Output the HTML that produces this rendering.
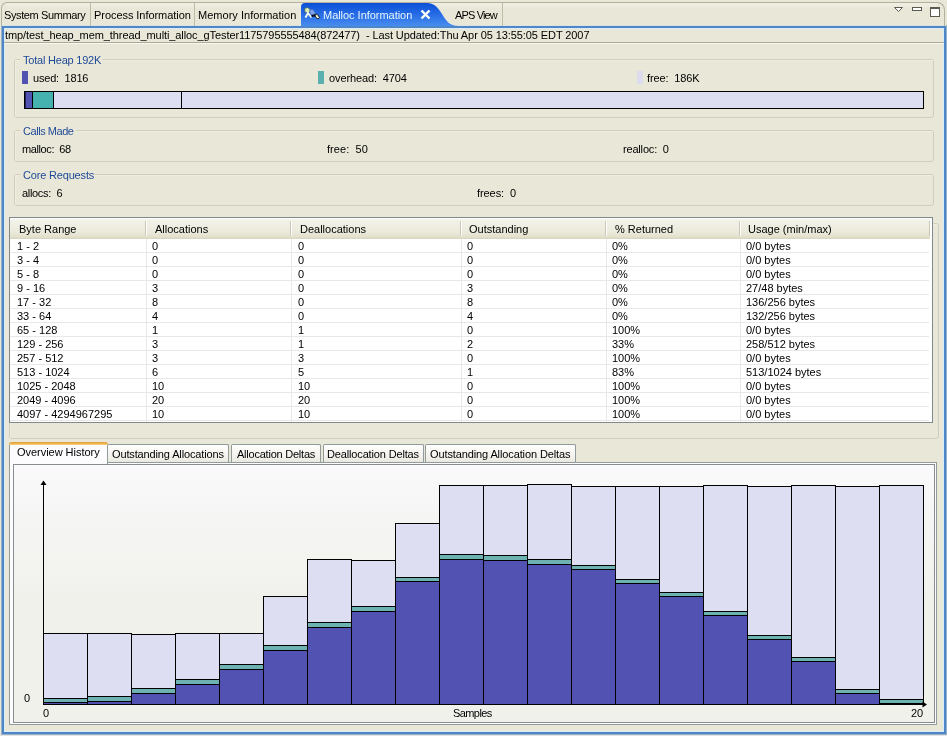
<!DOCTYPE html>
<html><head><meta charset="utf-8"><style>
html,body{margin:0;padding:0}
body{width:947px;height:736px;overflow:hidden;position:relative;background:#E9E7D8;font-family:"Liberation Sans", sans-serif;font-size:11px}
.t{position:absolute;white-space:nowrap;line-height:13px;will-change:transform}
</style></head><body>
<div style="position:absolute;left:1px;top:2px;width:944px;height:40px;border-top:1px solid #B4B09C;border-left:1px solid #B4B09C;border-right:1px solid #B4B09C;border-radius:6px 8px 0 0;box-sizing:border-box"></div>
<div style="position:absolute;left:7px;top:3px;width:930px;height:5px;background:linear-gradient(#F1EFE3,#EDEBDD 70%,#E9E7D8)"></div>
<div style="position:absolute;left:4px;top:25px;width:940px;height:1px;background:#DCE4E0"></div>
<div style="position:absolute;left:90px;top:3px;width:1px;height:23px;background:#C0BCA8"></div>
<div style="position:absolute;left:194px;top:3px;width:1px;height:23px;background:#C0BCA8"></div>
<div style="position:absolute;left:502px;top:3px;width:1px;height:23px;background:#C0BCA8"></div>
<div class="t" id="k0" style="left:4.00px;top:9.35px;color:#000;font-size:11px;letter-spacing:-0.385px;">System Summary</div>
<div class="t" id="k1" style="left:94.00px;top:9.35px;color:#000;font-size:11px;letter-spacing:-0.055px;">Process Information</div>
<div class="t" id="k2" style="left:197.50px;top:9.35px;color:#000;font-size:11px;letter-spacing:0.029px;">Memory Information</div>
<div class="t" id="k3" style="left:455.00px;top:9.35px;color:#000;font-size:11px;letter-spacing:-0.857px;">APS View</div>
<svg style="position:absolute;left:300px;top:2px" width="170" height="26" viewBox="0 0 170 26">
<defs><linearGradient id="tg" x1="0" y1="0" x2="0" y2="1">
<stop offset="0" stop-color="#0B4FD6"/><stop offset="0.5" stop-color="#2A6FE6"/><stop offset="1" stop-color="#4D93F0"/></linearGradient></defs>
<path d="M1,26 L1,5 Q1,1 5,1 L127,1 C135,1 138,6 142,12 C146,19 150,24 158,24 L158,26 Z" fill="url(#tg)"/>
</svg>
<div class="t" id="k4" style="left:322.60px;top:9.35px;color:#E6F6FF;font-size:11px;letter-spacing:-0.034px;">Malloc Information</div>
<svg style="position:absolute;left:420px;top:9px" width="11" height="11" viewBox="0 0 11 11">
<path d="M1.5,1.5 L9.5,9.5 M9.5,1.5 L1.5,9.5" stroke="#FFFFFF" stroke-width="2.4"/></svg>
<svg style="position:absolute;left:302px;top:5px" width="20" height="18" viewBox="0 0 20 18">
<path d="M2.5,3.5 L5.5,2.5 L8,4 L8,6.5 L6,8 L3,7.5 Z" fill="#D8ECB8" stroke="#3A5A60" stroke-width="0.8"/>
<path d="M3.5,12.5 L6,8 L9.5,12.5" fill="none" stroke="#F4FAF4" stroke-width="2"/>
<path d="M7.5,5 L10.5,4.5 L13.5,8 L11.5,10 L8.5,9 Z" fill="#8CA8E8" stroke="#5A78C0" stroke-width="0.6" opacity="0.9"/>
<path d="M9.5,11 L13,10.5" stroke="#050A18" stroke-width="2"/>
<path d="M13,9 L15.5,9.5 L17.5,12.5 L16,14 L13.5,12 Z" fill="#F0ECC8" stroke="#0A1A20" stroke-width="0.9"/>
</svg>
<svg style="position:absolute;left:890px;top:4px" width="54" height="16" viewBox="0 0 54 16">
<path d="M4.5,3.5 L12.5,3.5 L8.5,7.5 Z" fill="#fff" stroke="#5A5A50" stroke-width="1"/>
<rect x="22.5" y="3.5" width="9" height="3" fill="#fff" stroke="#5A5A50" stroke-width="1"/>
<rect x="40.5" y="3.5" width="9" height="9" fill="#fff" stroke="#5A5A50" stroke-width="1"/>
<rect x="41" y="4" width="8" height="1" fill="#5A5A50"/>
</svg>
<div style="position:absolute;left:0px;top:735px;width:947px;height:1px;background:#E4E4E6"></div>
<div style="position:absolute;left:1px;top:25px;width:946px;height:710px;border:1px solid #97B2C6;border-top:none;box-sizing:border-box"></div>
<div style="position:absolute;left:2px;top:26px;width:944px;height:708px;border:2px solid #4E86C8;box-sizing:border-box"></div>
<div style="position:absolute;left:4px;top:28px;width:940px;height:704px;border:1px solid #D8ECF9;box-sizing:border-box"></div>
<div class="t" id="k5" style="left:5.00px;top:29.35px;color:#000;font-size:11px;letter-spacing:-0.087px;">tmp/test_heap_mem_thread_multi_alloc_gTester1175795555484(872477)&nbsp; - Last Updated:Thu Apr 05 13:55:05 EDT 2007</div>
<div style="position:absolute;left:4px;top:42px;width:940px;height:1px;background:#ACA996"></div>
<div style="position:absolute;left:4px;top:43px;width:940px;height:1px;background:#F8F7F0"></div>
<div style="position:absolute;left:14px;top:59px;width:920px;height:59px;border:1px solid #D0CDB8;border-radius:3px;box-sizing:border-box"></div>
<div style="position:absolute;left:15px;top:60px;width:918px;height:57px;border-top:1px solid #EFEDE2;border-left:1px solid #EFEDE2;border-radius:2px;box-sizing:border-box"></div>
<div style="position:absolute;left:20px;top:54px;width:82px;height:10px;background:#E9E7D8"></div>
<div class="t" id="k6" style="left:23.00px;top:54.35px;color:#1F4A98;font-size:11px;letter-spacing:-0.214px;">Total Heap 192K</div>
<div style="position:absolute;left:14px;top:130px;width:920px;height:32px;border:1px solid #D0CDB8;border-radius:3px;box-sizing:border-box"></div>
<div style="position:absolute;left:15px;top:131px;width:918px;height:30px;border-top:1px solid #EFEDE2;border-left:1px solid #EFEDE2;border-radius:2px;box-sizing:border-box"></div>
<div style="position:absolute;left:20px;top:125px;width:56px;height:10px;background:#E9E7D8"></div>
<div class="t" id="k7" style="left:22.50px;top:125.35px;color:#1F4A98;font-size:11px;letter-spacing:-0.454px;">Calls Made</div>
<div style="position:absolute;left:14px;top:174px;width:920px;height:32px;border:1px solid #D0CDB8;border-radius:3px;box-sizing:border-box"></div>
<div style="position:absolute;left:15px;top:175px;width:918px;height:30px;border-top:1px solid #EFEDE2;border-left:1px solid #EFEDE2;border-radius:2px;box-sizing:border-box"></div>
<div style="position:absolute;left:20px;top:169px;width:74px;height:10px;background:#E9E7D8"></div>
<div class="t" id="k8" style="left:22.50px;top:169.35px;color:#1F4A98;font-size:11px;letter-spacing:-0.176px;">Core Requests</div>
<div style="position:absolute;left:9px;top:223px;width:930px;height:216px;border:1px solid #D0CDB8;border-radius:3px;box-sizing:border-box"></div>
<div style="position:absolute;left:10px;top:224px;width:928px;height:214px;border-top:1px solid #EFEDE2;border-left:1px solid #EFEDE2;border-radius:2px;box-sizing:border-box"></div>
<div style="position:absolute;left:22px;top:71px;width:6px;height:13px;background:#5252B2"></div>
<div class="t" id="k9" style="left:33.00px;top:72.35px;color:#000;font-size:11px;letter-spacing:-0.200px;">used:&nbsp; 1816</div>
<div style="position:absolute;left:318px;top:71px;width:6px;height:13px;background:#5AAFAF"></div>
<div class="t" id="k10" style="left:328.50px;top:72.35px;color:#000;font-size:11px;letter-spacing:-0.115px;">overhead:&nbsp; 4704</div>
<div style="position:absolute;left:637px;top:71px;width:6px;height:13px;background:#DCDCEE"></div>
<div class="t" id="k11" style="left:647.20px;top:72.35px;color:#000;font-size:11px;letter-spacing:-0.120px;">free:&nbsp; 186K</div>
<svg style="position:absolute;left:24px;top:91px" width="901" height="18" viewBox="0 0 901 18" shape-rendering="crispEdges">
<rect x="0.5" y="0.5" width="899" height="17" fill="#DEDEF3" stroke="#000"/>
<rect x="1" y="1" width="1" height="16" fill="#202060"/>
<rect x="2" y="1" width="6" height="16" fill="#5252B2"/>
<rect x="8" y="1" width="1" height="16" fill="#000"/>
<rect x="9" y="1" width="20" height="16" fill="#46B2B0"/>
<rect x="29" y="1" width="1" height="16" fill="#000"/>
<rect x="157" y="1" width="1" height="16" fill="#000"/>
</svg>
<div class="t" id="k12" style="left:22.00px;top:143.35px;color:#000;font-size:11px;letter-spacing:-0.400px;">malloc:&nbsp; 68</div>
<div class="t" id="k13" style="left:326.50px;top:143.35px;color:#000;font-size:11px;letter-spacing:0.059px;">free:&nbsp; 50</div>
<div class="t" id="k14" style="left:622.80px;top:143.35px;color:#000;font-size:11px;letter-spacing:-0.180px;">realloc:&nbsp; 0</div>
<div class="t" id="k15" style="left:22.00px;top:187.35px;color:#000;font-size:11px;letter-spacing:-0.324px;">allocs:&nbsp; 6</div>
<div class="t" id="k16" style="left:476.60px;top:187.35px;color:#000;font-size:11px;letter-spacing:-0.075px;">frees:&nbsp; 0</div>
<div style="position:absolute;left:9px;top:217px;width:924px;height:206px;border:1px solid #808A8C;background:#fff;box-sizing:border-box"></div>
<div style="position:absolute;left:10px;top:218px;width:920px;height:21px;background:linear-gradient(#FFFFFF 0px,#F3F2EA 2px,#EBEADB 14px,#E3E0CC 19px,#D6D2BD 21px)"></div>
<div style="position:absolute;left:145px;top:221px;width:1px;height:15px;background:#CBC7B3"></div>
<div style="position:absolute;left:146px;top:221px;width:1px;height:15px;background:#FFFFFF"></div>
<div style="position:absolute;left:290px;top:221px;width:1px;height:15px;background:#CBC7B3"></div>
<div style="position:absolute;left:291px;top:221px;width:1px;height:15px;background:#FFFFFF"></div>
<div style="position:absolute;left:460px;top:221px;width:1px;height:15px;background:#CBC7B3"></div>
<div style="position:absolute;left:461px;top:221px;width:1px;height:15px;background:#FFFFFF"></div>
<div style="position:absolute;left:605px;top:221px;width:1px;height:15px;background:#CBC7B3"></div>
<div style="position:absolute;left:606px;top:221px;width:1px;height:15px;background:#FFFFFF"></div>
<div style="position:absolute;left:739px;top:221px;width:1px;height:15px;background:#CBC7B3"></div>
<div style="position:absolute;left:740px;top:221px;width:1px;height:15px;background:#FFFFFF"></div>
<div style="position:absolute;left:929px;top:221px;width:1px;height:15px;background:#CBC7B3"></div>
<div class="t" style="left:19.00px;top:223.35px;color:#000;font-size:11px;">Byte Range</div>
<div class="t" style="left:155.00px;top:223.35px;color:#000;font-size:11px;">Allocations</div>
<div class="t" style="left:300.00px;top:223.35px;color:#000;font-size:11px;">Deallocations</div>
<div class="t" style="left:469.00px;top:223.35px;color:#000;font-size:11px;">Outstanding</div>
<div class="t" style="left:615.00px;top:223.35px;color:#000;font-size:11px;">% Returned</div>
<div class="t" style="left:748.00px;top:223.35px;color:#000;font-size:11px;">Usage (min/max)</div>
<div style="position:absolute;left:10px;top:252px;width:919px;height:1px;background:#E8E8E8"></div>
<div class="t" style="left:17.00px;top:240.35px;color:#000;font-size:11px;">1 - 2</div>
<div class="t" style="left:152.00px;top:240.35px;color:#000;font-size:11px;">0</div>
<div class="t" style="left:298.00px;top:240.35px;color:#000;font-size:11px;">0</div>
<div class="t" style="left:467.00px;top:240.35px;color:#000;font-size:11px;">0</div>
<div class="t" style="left:612.00px;top:240.35px;color:#000;font-size:11px;">0%</div>
<div class="t" style="left:746.00px;top:240.35px;color:#000;font-size:11px;">0/0 bytes</div>
<div style="position:absolute;left:10px;top:266px;width:919px;height:1px;background:#E8E8E8"></div>
<div class="t" style="left:17.00px;top:254.35px;color:#000;font-size:11px;">3 - 4</div>
<div class="t" style="left:152.00px;top:254.35px;color:#000;font-size:11px;">0</div>
<div class="t" style="left:298.00px;top:254.35px;color:#000;font-size:11px;">0</div>
<div class="t" style="left:467.00px;top:254.35px;color:#000;font-size:11px;">0</div>
<div class="t" style="left:612.00px;top:254.35px;color:#000;font-size:11px;">0%</div>
<div class="t" style="left:746.00px;top:254.35px;color:#000;font-size:11px;">0/0 bytes</div>
<div style="position:absolute;left:10px;top:280px;width:919px;height:1px;background:#E8E8E8"></div>
<div class="t" style="left:17.00px;top:268.35px;color:#000;font-size:11px;">5 - 8</div>
<div class="t" style="left:152.00px;top:268.35px;color:#000;font-size:11px;">0</div>
<div class="t" style="left:298.00px;top:268.35px;color:#000;font-size:11px;">0</div>
<div class="t" style="left:467.00px;top:268.35px;color:#000;font-size:11px;">0</div>
<div class="t" style="left:612.00px;top:268.35px;color:#000;font-size:11px;">0%</div>
<div class="t" style="left:746.00px;top:268.35px;color:#000;font-size:11px;">0/0 bytes</div>
<div style="position:absolute;left:10px;top:294px;width:919px;height:1px;background:#E8E8E8"></div>
<div class="t" style="left:17.00px;top:282.35px;color:#000;font-size:11px;">9 - 16</div>
<div class="t" style="left:152.00px;top:282.35px;color:#000;font-size:11px;">3</div>
<div class="t" style="left:298.00px;top:282.35px;color:#000;font-size:11px;">0</div>
<div class="t" style="left:467.00px;top:282.35px;color:#000;font-size:11px;">3</div>
<div class="t" style="left:612.00px;top:282.35px;color:#000;font-size:11px;">0%</div>
<div class="t" style="left:746.00px;top:282.35px;color:#000;font-size:11px;">27/48 bytes</div>
<div style="position:absolute;left:10px;top:308px;width:919px;height:1px;background:#E8E8E8"></div>
<div class="t" style="left:17.00px;top:296.35px;color:#000;font-size:11px;">17 - 32</div>
<div class="t" style="left:152.00px;top:296.35px;color:#000;font-size:11px;">8</div>
<div class="t" style="left:298.00px;top:296.35px;color:#000;font-size:11px;">0</div>
<div class="t" style="left:467.00px;top:296.35px;color:#000;font-size:11px;">8</div>
<div class="t" style="left:612.00px;top:296.35px;color:#000;font-size:11px;">0%</div>
<div class="t" style="left:746.00px;top:296.35px;color:#000;font-size:11px;">136/256 bytes</div>
<div style="position:absolute;left:10px;top:322px;width:919px;height:1px;background:#E8E8E8"></div>
<div class="t" style="left:17.00px;top:310.35px;color:#000;font-size:11px;">33 - 64</div>
<div class="t" style="left:152.00px;top:310.35px;color:#000;font-size:11px;">4</div>
<div class="t" style="left:298.00px;top:310.35px;color:#000;font-size:11px;">0</div>
<div class="t" style="left:467.00px;top:310.35px;color:#000;font-size:11px;">4</div>
<div class="t" style="left:612.00px;top:310.35px;color:#000;font-size:11px;">0%</div>
<div class="t" style="left:746.00px;top:310.35px;color:#000;font-size:11px;">132/256 bytes</div>
<div style="position:absolute;left:10px;top:336px;width:919px;height:1px;background:#E8E8E8"></div>
<div class="t" style="left:17.00px;top:324.35px;color:#000;font-size:11px;">65 - 128</div>
<div class="t" style="left:152.00px;top:324.35px;color:#000;font-size:11px;">1</div>
<div class="t" style="left:298.00px;top:324.35px;color:#000;font-size:11px;">1</div>
<div class="t" style="left:467.00px;top:324.35px;color:#000;font-size:11px;">0</div>
<div class="t" style="left:612.00px;top:324.35px;color:#000;font-size:11px;">100%</div>
<div class="t" style="left:746.00px;top:324.35px;color:#000;font-size:11px;">0/0 bytes</div>
<div style="position:absolute;left:10px;top:350px;width:919px;height:1px;background:#E8E8E8"></div>
<div class="t" style="left:17.00px;top:338.35px;color:#000;font-size:11px;">129 - 256</div>
<div class="t" style="left:152.00px;top:338.35px;color:#000;font-size:11px;">3</div>
<div class="t" style="left:298.00px;top:338.35px;color:#000;font-size:11px;">1</div>
<div class="t" style="left:467.00px;top:338.35px;color:#000;font-size:11px;">2</div>
<div class="t" style="left:612.00px;top:338.35px;color:#000;font-size:11px;">33%</div>
<div class="t" style="left:746.00px;top:338.35px;color:#000;font-size:11px;">258/512 bytes</div>
<div style="position:absolute;left:10px;top:364px;width:919px;height:1px;background:#E8E8E8"></div>
<div class="t" style="left:17.00px;top:352.35px;color:#000;font-size:11px;">257 - 512</div>
<div class="t" style="left:152.00px;top:352.35px;color:#000;font-size:11px;">3</div>
<div class="t" style="left:298.00px;top:352.35px;color:#000;font-size:11px;">3</div>
<div class="t" style="left:467.00px;top:352.35px;color:#000;font-size:11px;">0</div>
<div class="t" style="left:612.00px;top:352.35px;color:#000;font-size:11px;">100%</div>
<div class="t" style="left:746.00px;top:352.35px;color:#000;font-size:11px;">0/0 bytes</div>
<div style="position:absolute;left:10px;top:378px;width:919px;height:1px;background:#E8E8E8"></div>
<div class="t" style="left:17.00px;top:366.35px;color:#000;font-size:11px;">513 - 1024</div>
<div class="t" style="left:152.00px;top:366.35px;color:#000;font-size:11px;">6</div>
<div class="t" style="left:298.00px;top:366.35px;color:#000;font-size:11px;">5</div>
<div class="t" style="left:467.00px;top:366.35px;color:#000;font-size:11px;">1</div>
<div class="t" style="left:612.00px;top:366.35px;color:#000;font-size:11px;">83%</div>
<div class="t" style="left:746.00px;top:366.35px;color:#000;font-size:11px;">513/1024 bytes</div>
<div style="position:absolute;left:10px;top:392px;width:919px;height:1px;background:#E8E8E8"></div>
<div class="t" style="left:17.00px;top:380.35px;color:#000;font-size:11px;">1025 - 2048</div>
<div class="t" style="left:152.00px;top:380.35px;color:#000;font-size:11px;">10</div>
<div class="t" style="left:298.00px;top:380.35px;color:#000;font-size:11px;">10</div>
<div class="t" style="left:467.00px;top:380.35px;color:#000;font-size:11px;">0</div>
<div class="t" style="left:612.00px;top:380.35px;color:#000;font-size:11px;">100%</div>
<div class="t" style="left:746.00px;top:380.35px;color:#000;font-size:11px;">0/0 bytes</div>
<div style="position:absolute;left:10px;top:406px;width:919px;height:1px;background:#E8E8E8"></div>
<div class="t" style="left:17.00px;top:394.35px;color:#000;font-size:11px;">2049 - 4096</div>
<div class="t" style="left:152.00px;top:394.35px;color:#000;font-size:11px;">20</div>
<div class="t" style="left:298.00px;top:394.35px;color:#000;font-size:11px;">20</div>
<div class="t" style="left:467.00px;top:394.35px;color:#000;font-size:11px;">0</div>
<div class="t" style="left:612.00px;top:394.35px;color:#000;font-size:11px;">100%</div>
<div class="t" style="left:746.00px;top:394.35px;color:#000;font-size:11px;">0/0 bytes</div>
<div style="position:absolute;left:10px;top:420px;width:919px;height:1px;background:#E8E8E8"></div>
<div class="t" style="left:17.00px;top:408.35px;color:#000;font-size:11px;">4097 - 4294967295</div>
<div class="t" style="left:152.00px;top:408.35px;color:#000;font-size:11px;">10</div>
<div class="t" style="left:298.00px;top:408.35px;color:#000;font-size:11px;">10</div>
<div class="t" style="left:467.00px;top:408.35px;color:#000;font-size:11px;">0</div>
<div class="t" style="left:612.00px;top:408.35px;color:#000;font-size:11px;">100%</div>
<div class="t" style="left:746.00px;top:408.35px;color:#000;font-size:11px;">0/0 bytes</div>
<div style="position:absolute;left:146px;top:239px;width:1px;height:183px;background:#E8E8E8"></div>
<div style="position:absolute;left:291px;top:239px;width:1px;height:183px;background:#E8E8E8"></div>
<div style="position:absolute;left:461px;top:239px;width:1px;height:183px;background:#E8E8E8"></div>
<div style="position:absolute;left:606px;top:239px;width:1px;height:183px;background:#E8E8E8"></div>
<div style="position:absolute;left:740px;top:239px;width:1px;height:183px;background:#E8E8E8"></div>
<div style="position:absolute;left:9px;top:462px;width:928px;height:263px;border:1px solid #919B9C;background:#FCFCFE;box-sizing:border-box"></div>
<div style="position:absolute;left:13px;top:464px;width:922px;height:259px;border:1px solid #878C8F;background:linear-gradient(#FAFAFC 0px,#F5F5F4 55px,#F1F1EC 135px,#F1F1EC);box-sizing:border-box"></div>
<div style="position:absolute;left:107px;top:444px;width:122px;height:18px;border:1px solid #919B9C;border-bottom:none;border-radius:2px 2px 0 0;background:linear-gradient(#FEFEFE,#F4F3EE 60%,#E9E8E0);box-sizing:border-box"></div>
<div class="t" id="k17" style="left:112.00px;top:448.35px;color:#000;font-size:11px;letter-spacing:-0.136px;">Outstanding Allocations</div>
<div style="position:absolute;left:231px;top:444px;width:90px;height:18px;border:1px solid #919B9C;border-bottom:none;border-radius:2px 2px 0 0;background:linear-gradient(#FEFEFE,#F4F3EE 60%,#E9E8E0);box-sizing:border-box"></div>
<div class="t" id="k18" style="left:236.60px;top:448.35px;color:#000;font-size:11px;letter-spacing:-0.227px;">Allocation Deltas</div>
<div style="position:absolute;left:323px;top:444px;width:101px;height:18px;border:1px solid #919B9C;border-bottom:none;border-radius:2px 2px 0 0;background:linear-gradient(#FEFEFE,#F4F3EE 60%,#E9E8E0);box-sizing:border-box"></div>
<div class="t" id="k19" style="left:326.80px;top:448.35px;color:#000;font-size:11px;letter-spacing:-0.151px;">Deallocation Deltas</div>
<div style="position:absolute;left:425px;top:444px;width:151px;height:18px;border:1px solid #919B9C;border-bottom:none;border-radius:2px 2px 0 0;background:linear-gradient(#FEFEFE,#F4F3EE 60%,#E9E8E0);box-sizing:border-box"></div>
<div class="t" id="k20" style="left:430.20px;top:448.35px;color:#000;font-size:11px;letter-spacing:-0.114px;">Outstanding Allocation Deltas</div>
<div style="position:absolute;left:9px;top:442px;width:99px;height:22px;border-left:1px solid #919B9C;border-right:1px solid #919B9C;border-radius:3px 3px 0 0;background:#FCFCFE;box-sizing:border-box"></div>
<div style="position:absolute;left:9px;top:442px;width:99px;height:3px;background:linear-gradient(#DF9A38,#F0B850 60%,#F8D890);border-radius:3px 3px 0 0"></div>
<div class="t" id="k21" style="left:16.50px;top:446.35px;color:#000;font-size:11px;letter-spacing:-0.033px;">Overview History</div>
<svg style="position:absolute;left:0;top:0" width="947" height="736" viewBox="0 0 947 736" shape-rendering="crispEdges"><rect x="43.5" y="633.5" width="44" height="65" fill="#DEDEF3" stroke="#000"/><rect x="43.5" y="698.5" width="44" height="4" fill="#6DB1B1" stroke="#000"/><rect x="43.5" y="702.5" width="44" height="2" fill="#5252B2" stroke="#000"/><rect x="87.5" y="633.5" width="44" height="63" fill="#DEDEF3" stroke="#000"/><rect x="87.5" y="696.5" width="44" height="5" fill="#6DB1B1" stroke="#000"/><rect x="87.5" y="701.5" width="44" height="3" fill="#5252B2" stroke="#000"/><rect x="131.5" y="634.5" width="44" height="54" fill="#DEDEF3" stroke="#000"/><rect x="131.5" y="688.5" width="44" height="5" fill="#6DB1B1" stroke="#000"/><rect x="131.5" y="693.5" width="44" height="11" fill="#5252B2" stroke="#000"/><rect x="175.5" y="633.5" width="44" height="46" fill="#DEDEF3" stroke="#000"/><rect x="175.5" y="679.5" width="44" height="5" fill="#6DB1B1" stroke="#000"/><rect x="175.5" y="684.5" width="44" height="20" fill="#5252B2" stroke="#000"/><rect x="219.5" y="633.5" width="44" height="31" fill="#DEDEF3" stroke="#000"/><rect x="219.5" y="664.5" width="44" height="5" fill="#6DB1B1" stroke="#000"/><rect x="219.5" y="669.5" width="44" height="35" fill="#5252B2" stroke="#000"/><rect x="263.5" y="596.5" width="44" height="49" fill="#DEDEF3" stroke="#000"/><rect x="263.5" y="645.5" width="44" height="5" fill="#6DB1B1" stroke="#000"/><rect x="263.5" y="650.5" width="44" height="54" fill="#5252B2" stroke="#000"/><rect x="307.5" y="559.5" width="44" height="63" fill="#DEDEF3" stroke="#000"/><rect x="307.5" y="622.5" width="44" height="5" fill="#6DB1B1" stroke="#000"/><rect x="307.5" y="627.5" width="44" height="77" fill="#5252B2" stroke="#000"/><rect x="351.5" y="560.5" width="44" height="46" fill="#DEDEF3" stroke="#000"/><rect x="351.5" y="606.5" width="44" height="5" fill="#6DB1B1" stroke="#000"/><rect x="351.5" y="611.5" width="44" height="93" fill="#5252B2" stroke="#000"/><rect x="395.5" y="523.5" width="44" height="54" fill="#DEDEF3" stroke="#000"/><rect x="395.5" y="577.5" width="44" height="4" fill="#6DB1B1" stroke="#000"/><rect x="395.5" y="581.5" width="44" height="123" fill="#5252B2" stroke="#000"/><rect x="439.5" y="485.5" width="44" height="69" fill="#DEDEF3" stroke="#000"/><rect x="439.5" y="554.5" width="44" height="5" fill="#6DB1B1" stroke="#000"/><rect x="439.5" y="559.5" width="44" height="145" fill="#5252B2" stroke="#000"/><rect x="483.5" y="485.5" width="44" height="70" fill="#DEDEF3" stroke="#000"/><rect x="483.5" y="555.5" width="44" height="5" fill="#6DB1B1" stroke="#000"/><rect x="483.5" y="560.5" width="44" height="144" fill="#5252B2" stroke="#000"/><rect x="527.5" y="484.5" width="44" height="75" fill="#DEDEF3" stroke="#000"/><rect x="527.5" y="559.5" width="44" height="5" fill="#6DB1B1" stroke="#000"/><rect x="527.5" y="564.5" width="44" height="140" fill="#5252B2" stroke="#000"/><rect x="571.5" y="486.5" width="44" height="79" fill="#DEDEF3" stroke="#000"/><rect x="571.5" y="565.5" width="44" height="4" fill="#6DB1B1" stroke="#000"/><rect x="571.5" y="569.5" width="44" height="135" fill="#5252B2" stroke="#000"/><rect x="615.5" y="486.5" width="44" height="93" fill="#DEDEF3" stroke="#000"/><rect x="615.5" y="579.5" width="44" height="4" fill="#6DB1B1" stroke="#000"/><rect x="615.5" y="583.5" width="44" height="121" fill="#5252B2" stroke="#000"/><rect x="659.5" y="486.5" width="44" height="106" fill="#DEDEF3" stroke="#000"/><rect x="659.5" y="592.5" width="44" height="4" fill="#6DB1B1" stroke="#000"/><rect x="659.5" y="596.5" width="44" height="108" fill="#5252B2" stroke="#000"/><rect x="703.5" y="485.5" width="44" height="126" fill="#DEDEF3" stroke="#000"/><rect x="703.5" y="611.5" width="44" height="4" fill="#6DB1B1" stroke="#000"/><rect x="703.5" y="615.5" width="44" height="89" fill="#5252B2" stroke="#000"/><rect x="747.5" y="486.5" width="44" height="149" fill="#DEDEF3" stroke="#000"/><rect x="747.5" y="635.5" width="44" height="4" fill="#6DB1B1" stroke="#000"/><rect x="747.5" y="639.5" width="44" height="65" fill="#5252B2" stroke="#000"/><rect x="791.5" y="485.5" width="44" height="172" fill="#DEDEF3" stroke="#000"/><rect x="791.5" y="657.5" width="44" height="4" fill="#6DB1B1" stroke="#000"/><rect x="791.5" y="661.5" width="44" height="43" fill="#5252B2" stroke="#000"/><rect x="835.5" y="486.5" width="44" height="203" fill="#DEDEF3" stroke="#000"/><rect x="835.5" y="689.5" width="44" height="4" fill="#6DB1B1" stroke="#000"/><rect x="835.5" y="693.5" width="44" height="11" fill="#5252B2" stroke="#000"/><rect x="879.5" y="485.5" width="44" height="214" fill="#DEDEF3" stroke="#000"/><rect x="879.5" y="699.5" width="44" height="4" fill="#6DB1B1" stroke="#000"/><rect x="879.5" y="703.5" width="44" height="1" fill="#5252B2" stroke="#000"/><rect x="43" y="482" width="1" height="223" fill="#000"/><path d="M40.5,485 L43.5,480.5 L46.5,485 Z" fill="#000" shape-rendering="auto"/><rect x="43" y="704" width="883" height="1" fill="#000"/><path d="M922.5,701.5 L927,704.5 L922.5,707.5 Z" fill="#000" shape-rendering="auto"/></svg>
<div class="t" style="left:24.00px;top:692.35px;color:#000;font-size:11px;">0</div>
<div class="t" style="left:43.00px;top:707.35px;color:#000;font-size:11px;">0</div>
<div class="t" id="k22" style="left:452.60px;top:707.35px;color:#000;font-size:11px;letter-spacing:-0.583px;">Samples</div>
<div class="t" style="left:911.00px;top:707.35px;color:#000;font-size:11px;">20</div>
</body></html>
